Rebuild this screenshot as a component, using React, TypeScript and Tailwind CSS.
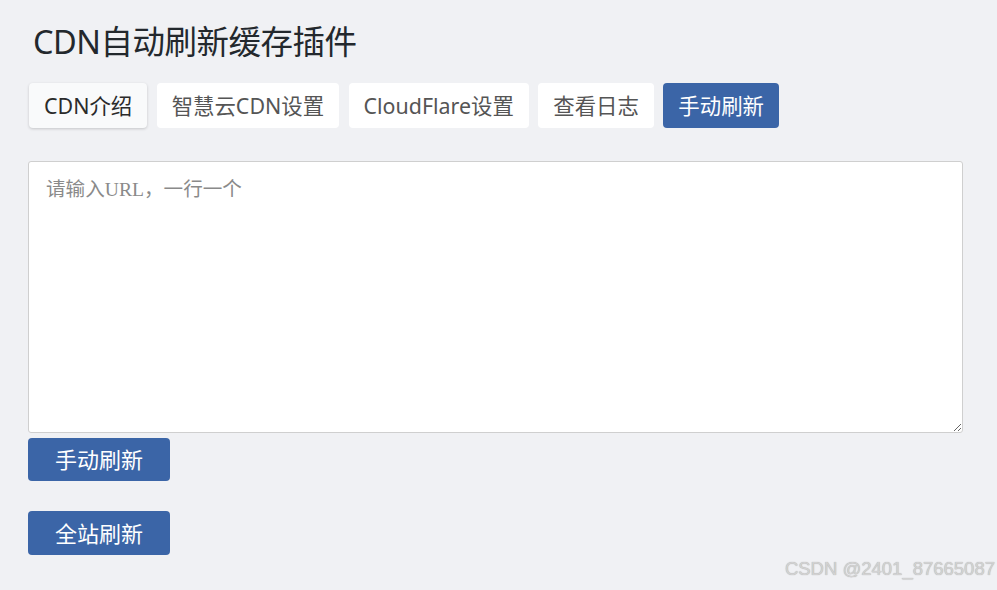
import { useState } from 'react';

const tabs = ['CDN介绍', '智慧云CDN设置', 'CloudFlare设置', '查看日志', '手动刷新'];

export default function App() {
  const [active, setActive] = useState(4);
  const [urls, setUrls] = useState('');

  return (
    <div
      className="min-h-[590px] w-full bg-[#f0f1f4] pl-[28px] pr-[34px] pt-[20px] relative"
      style={{ fontFamily: '"Noto Sans", "Noto Sans CJK SC", sans-serif' }}
    >
      <h1 className="pl-[5px] text-[32.5px] leading-[44px] text-[#23282d] tracking-[-0.5px]">
        CDN自动刷新缓存插件
      </h1>

      <div className="mt-[19px] pl-px flex gap-[9.5px]">
        {tabs.map((t, i) => (
          <button
            key={t}
            onClick={() => setActive(i)}
            className={`h-[45px] px-[15px] rounded-[4px] text-[21.4px] leading-none ${
              i === active
                ? 'bg-[#3b65a7] text-white'
                : i === 0
                ? 'bg-[#f9fafb] text-[#2b2b2b] shadow-[0_1px_3px_rgba(0,0,0,0.18)]'
                : 'bg-white text-[#555]'
            }`}
          >
            {t}
          </button>
        ))}
      </div>

      <textarea
        value={urls}
        onChange={(e) => setUrls(e.target.value)}
        placeholder="请输入URL，一行一个"
        className="mt-[33px] block w-full h-[272px] bg-white border border-[#cfcfcf] rounded-[3px] px-[17px] py-[13px] text-[19.6px] text-[#333] placeholder:text-[#8a8a8a] outline-none"
        style={{ fontFamily: '"Liberation Serif", "Noto Sans CJK SC", serif' }}
      />

      <div className="mt-[5px] flex flex-col items-start gap-[30px]">
        <button className="h-[43px] w-[142px] rounded-[4px] bg-[#3b65a7] text-white text-[22px]">
          手动刷新
        </button>
        <button className="h-[44px] w-[142px] rounded-[4px] bg-[#3b65a7] text-white text-[22px]">
          全站刷新
        </button>
      </div>

      <div
        className="absolute right-[2px] bottom-[7px] text-[18.5px] text-[#d2d2d2] [text-shadow:0_0_1px_#a0a0a0]"
        style={{ fontFamily: '"Liberation Sans", sans-serif' }}
      >
        CSDN @2401_87665087
      </div>
    </div>
  );
}
